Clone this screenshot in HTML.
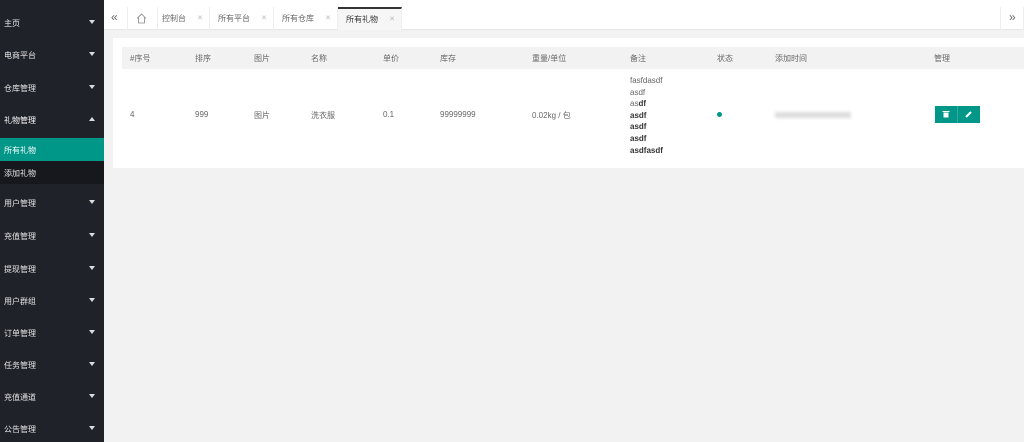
<!DOCTYPE html>
<html><head><meta charset="utf-8"><style>
*{margin:0;padding:0;box-sizing:border-box}
body{width:1024px;height:442px;overflow:hidden;background:#f2f2f2;font-family:"Liberation Sans","Noto Sans CJK SC",sans-serif;font-size:8px;color:#666;position:relative}
.side{position:absolute;left:0;top:0;width:104px;height:442px;background:#20222a}
.side .it{position:absolute;left:4px;color:#e6e6e6;font-size:8px}
.side .ar{position:absolute;left:89px;width:0;height:0;border-left:3.5px solid transparent;border-right:3.5px solid transparent;border-top:4px solid #ddd}
.side .up{border-top:none;border-bottom:4px solid #ddd}
.sel{position:absolute;left:0;top:138px;width:104px;height:23px;background:#009688}
.sub{position:absolute;left:0;top:161px;width:104px;height:23px;background:#17181d}
.top{position:absolute;left:104px;top:0;width:920px;height:7px;background:#fff}
.tabs{position:absolute;left:104px;top:7px;width:920px;height:23px;background:#fff;border-bottom:1px solid #e6e6e6}
.tab{position:absolute;top:0;height:23px;line-height:23px;border-right:1px solid #eee;font-size:8px;color:#666;padding-left:8px}
.tab .x{position:absolute;right:6px;color:#bbb;font-size:7px}
.card{position:absolute;left:113px;top:38px;width:911px;height:130px;background:#fff}
.hd{position:absolute;left:122px;top:47px;width:902px;height:22px;background:#f2f2f2}
.c{position:absolute;font-size:8px;color:#666}
.btn{position:absolute;top:106px;height:17px;background:#009688;color:#fff}
</style></head><body>
<div class="side">
<div class="sel"></div><div class="sub"></div>
<div class="it" style="top:18px">主页</div><div class="ar" style="top:20px"></div>
<div class="it" style="top:50px">电商平台</div><div class="ar" style="top:52px"></div>
<div class="it" style="top:83px">仓库管理</div><div class="ar" style="top:85px"></div>
<div class="it" style="top:115px;color:#fff">礼物管理</div><div class="ar up" style="top:117px"></div>
<div class="it" style="top:145px;color:#fff">所有礼物</div>
<div class="it" style="top:168px">添加礼物</div>
<div class="it" style="top:198px">用户管理</div><div class="ar" style="top:200px"></div>
<div class="it" style="top:231px">充值管理</div><div class="ar" style="top:233px"></div>
<div class="it" style="top:264px">提现管理</div><div class="ar" style="top:266px"></div>
<div class="it" style="top:296px">用户群组</div><div class="ar" style="top:298px"></div>
<div class="it" style="top:328px">订单管理</div><div class="ar" style="top:330px"></div>
<div class="it" style="top:360px">任务管理</div><div class="ar" style="top:362px"></div>
<div class="it" style="top:392px">充值通道</div><div class="ar" style="top:394px"></div>
<div class="it" style="top:424px">公告管理</div><div class="ar" style="top:426px"></div>
</div>
<div class="top"></div>
<div class="tabs">
<div class="tab" style="left:0;width:24px;padding-left:7px;font-size:12px;line-height:21px;color:#666">«</div>
<div class="tab" style="left:24px;width:30px;padding-left:8px"><svg width="11" height="11" viewBox="0 0 11 11" style="margin-top:6px"><path d="M1 5.5L5.5 1L10 5.5M2.5 4.5V10H8.5V4.5" fill="none" stroke="#888" stroke-width="0.8"/></svg></div>
<div class="tab" style="left:50px;width:56px">控制台<span class="x">✕</span></div>
<div class="tab" style="left:106px;width:64px">所有平台<span class="x">✕</span></div>
<div class="tab" style="left:170px;width:64px">所有仓库<span class="x">✕</span></div>
<div class="tab" style="left:234px;width:64px;background:#f6f6f6;border-top:2px solid #333;color:#333;line-height:21px">所有礼物<span class="x">✕</span></div>
<div class="tab" style="left:896px;width:24px;border-left:1px solid #eee;font-size:12px;line-height:21px">»</div>
</div>
<div class="card"></div>
<div class="hd"></div>
<div class="c" style="left:130px;top:53px">#序号</div>
<div class="c" style="left:195px;top:53px">排序</div>
<div class="c" style="left:254px;top:53px">图片</div>
<div class="c" style="left:311px;top:53px">名称</div>
<div class="c" style="left:383px;top:53px">单价</div>
<div class="c" style="left:440px;top:53px">库存</div>
<div class="c" style="left:532px;top:53px">重量/单位</div>
<div class="c" style="left:630px;top:53px">备注</div>
<div class="c" style="left:717px;top:53px">状态</div>
<div class="c" style="left:775px;top:53px">添加时间</div>
<div class="c" style="left:934px;top:53px">管理</div>
<div class="c" style="left:130px;top:110px">4</div>
<div class="c" style="left:195px;top:110px">999</div>
<div class="c" style="left:254px;top:110px">图片</div>
<div class="c" style="left:311px;top:110px">洗衣服</div>
<div class="c" style="left:383px;top:110px">0.1</div>
<div class="c" style="left:440px;top:110px">99999999</div>
<div class="c" style="left:532px;top:110px">0.02kg / 包</div>
<div class="c" style="left:630px;top:75px;line-height:11.6px">fasfdasdf<br>asdf<br>as<b style="color:#333">df</b><br><b style="color:#333">asdf<br>asdf<br>asdf<br>asdfasdf</b></div>
<div style="position:absolute;left:717px;top:112px;width:5px;height:5px;border-radius:50%;background:#009688"></div>
<div style="position:absolute;left:775px;top:112px;width:76px;height:6px;background:#ddd;filter:blur(1.5px)"></div>
<div class="btn" style="left:935px;width:22px"><svg width="22" height="17"><rect x="8.5" y="6.5" width="5" height="5" fill="#fff"/><rect x="7.5" y="5" width="7" height="1" fill="#fff"/></svg></div>
<div class="btn" style="left:957px;width:23px;border-left:1px solid #33ab9f"><svg width="22" height="17"><path d="M8 11L13 6" stroke="#fff" stroke-width="2"/></svg></div>
</body></html>
